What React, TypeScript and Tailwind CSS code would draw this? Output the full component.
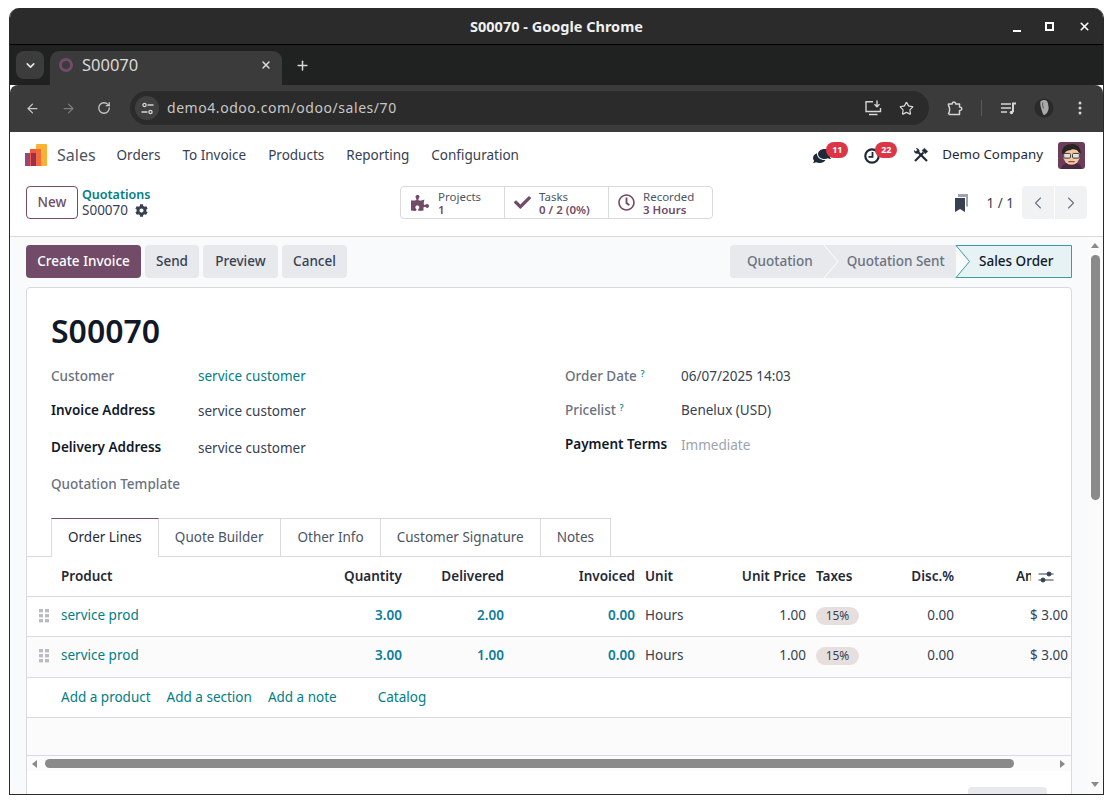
import React from "react";
import { ArrowLeft, ArrowRight, RotateCw, Star, ChevronDown, Plus, X, ChevronLeft, ChevronRight } from "lucide-react";
import { FaPuzzlePiece, FaCheck, FaRegClock, FaCog, FaComments } from "react-icons/fa";

const cols = "grid grid-cols-[24px_239px_92px_92px_121px_51px_100px_44px_84px_104px] gap-x-[10px] items-center";

function Avatar() {
  return (
    <svg width="27" height="27" viewBox="0 0 26 26" className="rounded-[3px]">
      <rect width="26" height="26" fill="#6b3d5a" />
      <path d="M3 26c1-5 5-6 10-6s9 1 10 6z" fill="#4a2a40" />
      <ellipse cx="13" cy="13.500" rx="8" ry="8.500" fill="#f3c9a5" />
      <path d="M4 11C3 5 8 2 14 2c4 0 8 3 8 9l-2-1c-1-2-3-3-6-3-2 1-6 1-7 3l-2 2z" fill="#2c2323" />
      <rect x="5.500" y="11" width="6.500" height="4.500" rx="1" fill="#e7e2d8" stroke="#333" strokeWidth="0.9" />
      <rect x="14" y="11" width="6.500" height="4.500" rx="1" fill="#e7e2d8" stroke="#333" strokeWidth="0.9" />
      <path d="M10 19h6" stroke="#8b4a3a" strokeWidth="1.2" />
    </svg>
  );
}

function Row({ del, alt }: { del: string; alt?: boolean }) {
  return (
    <div className={`${cols} ${alt ? "h-[41px] bg-[#fbfbfb] pb-[4px]" : "h-[40px] bg-white pb-[2px]"} border-b border-[#d8dadd] text-[13.5px] text-[#374151]`}>
      <svg width="10" height="14" viewBox="0 0 10 14" className={`ml-[12px] ${alt ? "mt-[2px]" : ""}`} fill="#b9bdc3">
        <rect x="0" y="0" width="4" height="3.400" /><rect x="6" y="0" width="4" height="3.400" />
        <rect x="0" y="5" width="4" height="3.400" /><rect x="6" y="5" width="4" height="3.400" />
        <rect x="0" y="10" width="4" height="3.400" /><rect x="6" y="10" width="4" height="3.400" />
      </svg>
      <span className="text-[#017e84]">service prod</span>
      <span className="text-right font-semibold text-[#0f7c9c]">3.00</span>
      <span className="text-right font-semibold text-[#0f7c9c]">{del}</span>
      <span className="text-right font-semibold text-[#0f7c9c]">0.00</span>
      <span>Hours</span>
      <span className="text-right">1.00</span>
      <span className={`h-[18px] w-[43px] rounded-full bg-[#e7dfdd] text-center text-[12px] leading-[18px] ${alt ? "mt-[2px]" : ""}`}>15%</span>
      <span className="text-right">0.00</span>
      <span className="text-right">$ 3.00</span>
    </div>
  );
}

function Tab({ children, active, wide }: { children: React.ReactNode; active?: boolean; wide?: boolean }) {
  return (
    <div className={`flex h-[39px] items-center border-r border-t border-[#d8dadd] pb-px pl-[16px] ${wide ? "pr-[17px]" : "pr-[16px]"} text-[13.5px] ${active ? "relative z-10 -mb-px border-l border-t-[#714b67] bg-white text-[#1f2937]" : "-mb-px border-b text-[#4b5563]"}`}>
      {children}
    </div>
  );
}

function Field({ label, value, strong, link, h }: { label: string; value?: string; strong?: boolean; link?: boolean; h: string }) {
  return (
    <div className={`flex ${h} text-[13.5px]`}>
      <span className={`w-[147px] shrink-0 ${strong ? "font-semibold text-[#111827]" : "font-medium text-[#6b7280]"}`}>{label}</span>
      {value && <span className={link ? "text-[#017e84]" : "pt-px text-[#374151]"}>{value}</span>}
    </div>
  );
}

export default function App() {
  return (
    <div className="h-[804px] w-[1113px] overflow-hidden bg-white pl-[9px] pt-[8px]" style={{ fontFamily: '"Noto Sans", sans-serif' }}>
      <div className="flex h-[787px] w-[1095px] flex-col overflow-hidden rounded-t-[10px] border-x border-b border-[#2a2a2a]">
        {/* Title bar */}
        <div className="relative flex h-[37px] shrink-0 items-center justify-center border-b border-black bg-[#2b2b2b] pt-[2px] text-[14.5px] font-bold text-[#f0f0f0]">
          S00070 - Google Chrome
          <div className="absolute right-[12px] top-[12px] flex items-center gap-[24px] text-white">
            <span className="mt-[8px] block h-[2px] w-[8px] bg-white" />
            <span className="block h-[9px] w-[9px] border-2 border-white" />
            <X size={13} strokeWidth={3} />
          </div>
        </div>
        {/* Tab strip */}
        <div className="flex h-[40px] shrink-0 items-start bg-[#202221] pl-[6px] pt-[6px]">
          <div className="flex h-[28px] w-[28px] items-center justify-center rounded-[8px] bg-[#3c3c3c] text-[#e6e6e6]">
            <ChevronDown size={13} strokeWidth={3} />
          </div>
          <div className="ml-[6px] flex h-[34px] w-[232px] items-start rounded-t-[9px] bg-[#3b3b3b] pl-[9px] pr-[10px] pt-[3px] text-[#d9d9d9]">
            <span className="mt-[4px] block h-[14px] w-[14px] rounded-full border-[3px] border-[#714b67]" />
            <span className="ml-[9px] flex-1 text-[16.5px] leading-[22px]">S00070</span>
            <X size={12} strokeWidth={3} className="mt-[5px]" />
          </div>
          <Plus size={15} strokeWidth={2.4} className="ml-[13px] mt-[7px] text-[#d9d9d9]" />
        </div>
        {/* Toolbar */}
        <div className="flex h-[47px] shrink-0 items-center rounded-t-[8px] bg-[#3b3b3b] pb-px pl-[15px] text-[#c7c7c7]">
          <ArrowLeft size={15} strokeWidth={2} />
          <ArrowRight size={15} strokeWidth={2} className="ml-[21px] text-[#7d7d7d]" />
          <RotateCw size={14} strokeWidth={2.2} className="ml-[21px]" />
          <div className="ml-[19px] flex h-[34px] w-[799px] items-center rounded-full bg-[#2b2b2b] pl-[5px]">
            <div className="flex h-[24px] w-[24px] items-center justify-center rounded-full bg-[#404040]">
              <svg width="13" height="13" viewBox="0 0 13 13" fill="none" stroke="#d5d5d5" strokeWidth="1.3">
                <circle cx="3.500" cy="3" r="1.600" /><path d="M6.500 3H12.500M0.500 10H6.500" /><circle cx="9.500" cy="10" r="1.600" />
              </svg>
            </div>
            <span className="ml-[8px] flex-1 pb-px text-[14px] tracking-[0.55px] text-[#c7c7c7]">demo4.odoo.com/odoo/sales/70</span>
            <svg width="17" height="16" viewBox="0 0 17 16" fill="none" stroke="#d5d5d5" strokeWidth="1.400">
              <path d="M8 1.700H1V11.500H15.500V8" />
              <path d="M4 14.500H12.500" />
              <path d="M12 0.500V6.500M9.500 4.200L12 6.700L14.500 4.200" />
            </svg>
            <Star size={15} strokeWidth={2} className="ml-[17px] mr-[15px] text-[#d5d5d5]" />
          </div>
          <svg width="16" height="15" viewBox="0 0 16 15" fill="none" stroke="#d5d5d5" strokeWidth="1.500" className="ml-[18px]">
            <path d="M1.500 3H5.200C5 0.200 8.800 0.200 8.600 3H12.500V6C15.500 5.800 15.500 9.700 12.500 9.500V13.500H2.500L1.500 12.500C3 10.500 3 6.500 1.500 4.500Z" strokeLinejoin="round" />
          </svg>
          <span className="ml-[18px] block h-[16px] w-px bg-[#5a5a5a]" />
          <svg width="15" height="13" viewBox="0 0 15 13" className="ml-[19px]" fill="none" stroke="#d5d5d5" strokeWidth="1.500">
            <path d="M0 2H10M0 6H10M0 10H6" /><path d="M12 1V10" strokeWidth="2" /><path d="M11 1.500H15" strokeWidth="2" /><circle cx="10.500" cy="10.500" r="1.800" fill="#d5d5d5" stroke="none" />
          </svg>
          <svg width="20" height="20" viewBox="0 0 20 20" className="ml-[18px]">
            <circle cx="10" cy="10" r="9.500" fill="#2a2a2a" />
            <path d="M6.500 3.500c2.500-2.500 7-2 7.500 2 .3 3 1.500 5-.5 8.500-1.500 2.500-3.500 4-4.500 2-1-3-3.500-9.500-2.500-12.500z" fill="#a9a9a9" />
            <path d="M9 4.500c-1 2 0 4 .5 6" stroke="#555" strokeWidth="1" fill="none" />
          </svg>
          <svg width="4" height="14" viewBox="0 0 4 14" className="ml-[24px]" fill="#d5d5d5">
            <circle cx="2" cy="2" r="1.500" /><circle cx="2" cy="7" r="1.500" /><circle cx="2" cy="12" r="1.500" />
          </svg>
        </div>
        {/* Navbar */}
        <div className="flex h-[46px] shrink-0 items-center bg-white pl-[15px] text-[13.5px] text-[#374151]">
          <svg width="22" height="22" viewBox="0 0 22 22">
            <rect x="0" y="9" width="10" height="13" fill="#96487a" />
            <rect x="5" y="5" width="11" height="17" fill="#f15a40" />
            <rect x="6" y="9" width="5" height="13" fill="#9c2f4a" />
            <rect x="11" y="0" width="11" height="22" rx="1" fill="#f9b233" />
            <rect x="11" y="5" width="5" height="17" fill="#f26b3a" />
          </svg>
          <span className="ml-[10px] text-[16px] text-[#4b5563]">Sales</span>
          <span className="ml-[21px]">Orders</span>
          <span className="ml-[22px]">To Invoice</span>
          <span className="ml-[22px]">Products</span>
          <span className="ml-[22px]">Reporting</span>
          <span className="ml-[22px]">Configuration</span>
          <div className="flex-1" />
          <div className="relative h-[20px] w-[20px]">
            <FaComments size={18} className="absolute left-0 top-[2px] -scale-x-100 text-[#1f2937]" />
            <span className="absolute left-[13px] top-[-3px] h-[16px] w-[22px] rounded-full bg-[#dc3545] text-center text-[9px] font-bold leading-[16px] text-white">11</span>
          </div>
          <div className="relative ml-[31px] h-[20px] w-[20px]">
            <svg width="16" height="16" viewBox="0 0 16 16" className="absolute left-0 top-[3px]" fill="none" stroke="#1f2937" strokeWidth="2.200">
              <circle cx="8" cy="8" r="6.700" /><path d="M8.500 4V8.800H4.500" strokeWidth="1.800" />
            </svg>
            <span className="absolute left-[11px] top-[-3px] h-[16px] w-[22px] rounded-full bg-[#dc3545] text-center text-[9px] font-bold leading-[16px] text-white">22</span>
          </div>
          <svg width="16" height="16" viewBox="0 0 16 16" className="ml-[29px]" fill="none" stroke="#1f2937">
            <path d="M2 14L10.500 5.500" strokeWidth="2.200" />
            <path d="M9 3.500L11.500 1.200L14.800 4.500L12.300 6.800Z" fill="#1f2937" strokeWidth="0.500" />
            <path d="M5.500 5.500L14 14" strokeWidth="2.200" />
            <path d="M1.200 3.500C0.800 5.500 2.500 7 5 6.300L6.300 5C6.800 2.800 5 1 3 1.200L4.500 3L3 4.500Z" fill="#1f2937" strokeWidth="0.300" />
          </svg>
          <span className="ml-[13px] text-[13.3px] text-[#1f2937]">Demo Company</span>
          <div className="ml-[15px] mr-[18px] h-[27px] w-[27px]"><Avatar /></div>
        </div>
        {/* Control panel */}
        <div className="flex h-[59px] shrink-0 items-start border-b border-[#d8dadd] bg-white pl-[16px] pt-[8px]">
          <div className="flex h-[33px] w-[52px] items-center justify-center rounded-[4px] border border-[#714b67] text-[13.5px] font-medium text-[#714b67]">New</div>
          <div className="ml-[4px] flex w-[318px] flex-col pt-[1px] text-[12.5px] leading-[15px]">
            <span className="font-semibold text-[#017e84]">Quotations</span>
            <span className="mt-px flex items-center gap-[7px] text-[13.5px] text-[#374151]">S00070 <FaCog size={13} className="text-[#374151]" /></span>
          </div>
          <div className="flex h-[33px] overflow-hidden rounded-[4px] border border-[#d8dadd] text-[11.5px] leading-[13px]">
            {[
              { icon: <FaPuzzlePiece size={18} />, a: "Projects", b: "1", w: "w-[104px]", pl: "pl-[10px]", g: "gap-[9px]" },
              { icon: <FaCheck size={17} />, a: "Tasks", b: "0 / 2 (0%)", w: "w-[104px]", pl: "pl-[9px]", g: "gap-[8px]" },
              { icon: <FaRegClock size={17} />, a: "Recorded", b: "3 Hours", w: "w-[103px]", pl: "pl-[9px]", g: "gap-[8px]" },
            ].map((s, i) => (
              <div key={s.a} className={`flex items-center ${s.w} ${s.pl} ${s.g} ${i < 2 ? "border-r border-[#d8dadd]" : ""}`}>
                <span className="text-[#714b67]">{s.icon}</span>
                <div className="flex flex-col">
                  <span className="text-[#4b5563]">{s.a}</span>
                  <span className="font-semibold text-[#714b67]">{s.b}</span>
                </div>
              </div>
            ))}
          </div>
          <div className="flex-1" />
          <svg width="13" height="18" viewBox="0 0 13 18" className="mt-[8px]">
            <path d="M3 0H13V13L11 12V3H3Z" fill="#9ca3af" />
            <path d="M0 4H10V18L5 15L0 18Z" fill="#374151" />
          </svg>
          <span className="ml-[19px] mt-[7px] text-[13.5px] text-[#374151]">1 / 1</span>
          <div className="ml-[8px] mr-[16px] flex h-[33px] gap-px overflow-hidden rounded-[4px]">
            <div className="flex w-[32px] items-center justify-center bg-[#f1f2f4] text-[#6b7280]"><ChevronLeft size={20} strokeWidth={1.300} /></div>
            <div className="flex w-[32px] items-center justify-center bg-[#f1f2f4] text-[#6b7280]"><ChevronRight size={20} strokeWidth={1.300} /></div>
          </div>
        </div>
        {/* Content */}
        <div className="flex min-h-0 flex-1 bg-[#f9fafb]">
          <div className="w-[1078px] shrink-0 overflow-hidden pl-[16px] pr-[16px]">
            {/* Buttons + statusbar */}
            <div className="flex h-[50px] items-start pt-[8px] text-[13.5px] font-medium">
              <div className="flex h-[33px] w-[115px] items-center justify-center rounded-[4px] bg-[#714b67] pb-px text-white">Create Invoice</div>
              {[["Send", "w-[54px]"], ["Preview", "w-[75px]"], ["Cancel", "w-[65px]"]].map(([t, w]) => (
                <div key={t} className={`ml-[4px] flex h-[33px] ${w} items-center justify-center rounded-[4px] bg-[#e7e9ed] pb-px text-[#374151]`}>{t}</div>
              ))}
              <div className="flex-1" />
              <div className="relative flex h-[33px] w-[342px]">
                <div className="flex w-[226px] items-center rounded-l-[4px] bg-[#e7e9ed] pb-px text-[#6b7280]">
                  <span className="ml-[17px]">Quotation</span>
                  <span className="ml-[34px]">Quotation Sent</span>
                </div>
                <svg width="342" height="33" viewBox="0 0 342 33" className="absolute left-0 top-0" fill="none">
                  <path d="M94 0L108 16.500L94 33" stroke="#ffffff" strokeWidth="1" />
                  <path d="M226 0.500H341.500V32.500H226L239.500 16.500Z" fill="#e6f2f3" />
                  <path d="M226 0.500H341.500V32.500H226L239.500 16.500Z" stroke="#3a9da1" strokeWidth="1" />
                </svg>
                <span className="absolute left-[249px] top-[6px] text-[#111827]">Sales Order</span>
              </div>
            </div>
            {/* Sheet */}
            <div className="h-[600px] rounded-t-[4px] border border-[#d8dadd] bg-white">
              <h1 className="ml-[24px] mt-[23px] text-[32px] font-semibold leading-[40px] text-[#111827]">S00070</h1>
              <div className="ml-[24px] mt-[15px] flex">
                <div className="w-[514px]">
                  <Field label="Customer" value="service customer" link h="h-[34px]" />
                  <Field label="Invoice Address" value="service customer" strong h="h-[37px]" />
                  <Field label="Delivery Address" value="service customer" strong h="h-[37px]" />
                  <Field label="Quotation Template" h="h-[34px]" />
                </div>
                <div>
                  <div className="flex h-[34px] text-[13.5px]">
                    <span className="w-[116px] font-medium text-[#6b7280]">Order Date <sup className="text-[9px] text-[#017e84]">?</sup></span>
                    <span className="text-[#374151]">06/07/2025 14:03</span>
                  </div>
                  <div className="flex h-[34px] text-[13.5px]">
                    <span className="w-[116px] font-medium text-[#6b7280]">Pricelist <sup className="text-[9px] text-[#017e84]">?</sup></span>
                    <span className="text-[#374151]">Benelux (USD)</span>
                  </div>
                  <div className="flex h-[34px] text-[13.5px]">
                    <span className="w-[116px] font-semibold text-[#111827]">Payment Terms</span>
                    <span className="pt-px text-[#9ca3af]">Immediate</span>
                  </div>
                </div>
              </div>
              {/* Tabs */}
              <div className="mt-[10px] flex border-b border-[#d8dadd] pl-[24px]">
                <Tab active>Order Lines</Tab>
                <Tab wide>Quote Builder</Tab>
                <Tab>Other Info</Tab>
                <Tab>Customer Signature</Tab>
                <Tab>Notes</Tab>
              </div>
              {/* Table */}
              <div className={`${cols} h-[40px] border-b border-[#d8dadd] text-[13.5px] font-semibold text-[#1f2937]`}>
                <span />
                <span>Product</span>
                <span className="text-right">Quantity</span>
                <span className="text-right">Delivered</span>
                <span className="text-right">Invoiced</span>
                <span>Unit</span>
                <span className="text-right">Unit Price</span>
                <span>Taxes</span>
                <span className="text-right">Disc.%</span>
                <span className="flex items-center justify-end pr-[14px]">
                  <span className="w-[15px] overflow-hidden whitespace-nowrap">Amount</span>
                  <svg width="16" height="14" viewBox="0 0 16 14" className="ml-[7px]" fill="#374151" stroke="#374151">
                    <path d="M0.500 4H15.500M0.500 10H15.500" fill="none" strokeWidth="1" /><circle cx="11" cy="4" r="2" /><circle cx="5" cy="10" r="2" />
                  </svg>
                </span>
              </div>
              <Row del="2.00" />
              <Row del="1.00" alt />
              <div className="flex h-[40px] items-center gap-[16px] border-b border-[#d8dadd] pl-[34px] text-[13.5px] text-[#017e84]">
                <span>Add a product</span>
                <span>Add a section</span>
                <span>Add a note</span>
                <span className="ml-[25px]">Catalog</span>
              </div>
              <div className="h-[38px] border-b border-[#d8dadd] bg-[#fbfbfb]" />
              {/* Horizontal scrollbar */}
              <div className="flex h-[15px] items-center bg-[#fbfbfb] pl-[5px]">
                <span className="block h-0 w-0 border-y-[4px] border-r-[5px] border-y-transparent border-r-[#8a8a8a]" />
                <span className="ml-[8px] block h-[9px] w-[969px] rounded-full bg-[#8a8a8a]" />
                <span className="ml-[46px] block h-0 w-0 border-y-[4px] border-l-[5px] border-y-transparent border-l-[#8a8a8a]" />
              </div>
              <div className="ml-[941px] mt-[16px] h-[20px] w-[79px] rounded-[4px] bg-[#e7e9ed]" />
            </div>
          </div>
          {/* Vertical scrollbar */}
          <div className="flex flex-1 flex-col items-center bg-[#fbfbfc] pr-px pt-[6px]">
            <span className="block h-0 w-0 border-x-[4px] border-b-[5px] border-x-transparent border-b-[#8a8a8a]" />
            <span className="mt-[7px] block h-[245px] w-[9px] rounded-full bg-[#8a8a8a]" />
            <div className="flex-1" />
            <span className="mb-[7px] block h-0 w-0 border-x-[4px] border-t-[5px] border-x-transparent border-t-[#8a8a8a]" />
          </div>
        </div>
      </div>
    </div>
  );
}
